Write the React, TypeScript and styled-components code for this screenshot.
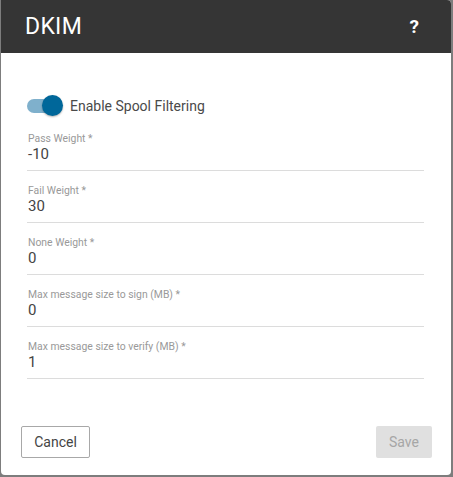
import React, { useState } from 'react';
import styled, { createGlobalStyle } from 'styled-components';

const GlobalStyle = createGlobalStyle`
  html, body {
    margin: 0;
    padding: 0;
    background: #7d7d7d;
    font-family: Roboto, 'Liberation Sans', sans-serif;
  }
`;

const fields = [
  { label: 'Pass Weight *', value: '-10' },
  { label: 'Fail Weight *', value: '30' },
  { label: 'None Weight *', value: '0' },
  { label: 'Max message size to sign (MB) *', value: '0' },
  { label: 'Max message size to verify (MB) *', value: '1' },
];

const App = () => {
  const [enabled, setEnabled] = useState(true);

  return (
    <>
      <GlobalStyle />
      <Dialog>
        <Header>
          <Title>DKIM</Title>
          <Help>?</Help>
        </Header>
        <Body>
          <ToggleRow onClick={() => setEnabled(!enabled)}>
            <Switch on={enabled}>
              <Knob on={enabled} />
            </Switch>
            <ToggleLabel>Enable Spool Filtering</ToggleLabel>
          </ToggleRow>
          {fields.map((f) => (
            <Field key={f.label}>
              <Label>{f.label}</Label>
              <Value>{f.value}</Value>
            </Field>
          ))}
        </Body>
        <Footer>
          <Cancel>Cancel</Cancel>
          <Save disabled>Save</Save>
        </Footer>
      </Dialog>
    </>
  );
};

export default App;

interface IOn {
  on: boolean;
}

const Dialog = styled.div`
  margin-left: 1px;
  width: 450px;
  height: 475px;
  background: #ffffff;
  border-radius: 0 4px 4px 4px;
  overflow: hidden;
  display: flex;
  flex-direction: column;
`;

const Header = styled.div`
  display: flex;
  justify-content: space-between;
  align-items: center;
  height: 53px;
  padding: 0 32px 0 24px;
  background: #353535;
  color: #ffffff;
`;

const Title = styled.h1`
  margin: 0;
  font-size: 23px;
  font-weight: 400;
  letter-spacing: 0.3px;
`;

const Help = styled.span`
  font-size: 19px;
  font-weight: 700;
`;

const Body = styled.div`
  flex: 1;
  padding: 41px 27px 0 26px;
`;

const ToggleRow = styled.div`
  display: flex;
  align-items: center;
  height: 24px;
  margin-bottom: 1px;
  cursor: pointer;
`;

const Switch = styled.div<IOn>`
  position: relative;
  width: 34px;
  height: 14px;
  border-radius: 7px;
  background: ${({ on }) => (on ? '#7fb0cc' : '#bdbdbd')};
  margin-right: 9px;
`;

const Knob = styled.div<IOn>`
  position: absolute;
  top: -4px;
  left: ${({ on }) => (on ? '15px' : '-2px')};
  width: 21px;
  height: 21px;
  border-radius: 50%;
  background: ${({ on }) => (on ? '#00679a' : '#f5f5f5')};
  box-shadow: 0 1px 2px rgba(0, 0, 0, 0.3);
`;

const ToggleLabel = styled.span`
  font-size: 14px;
  color: #4a4a4a;
`;

const Field = styled.div`
  height: 51px;
  padding-left: 1px;
  border-bottom: 1px solid #dcdcdc;
`;

const Label = styled.div`
  padding-top: 13px;
  font-size: 10.4px;
  line-height: 13px;
  color: #999999;
`;

const Value = styled.div`
  font-size: 15px;
  line-height: 18px;
  color: #444444;
`;

const Footer = styled.div`
  display: flex;
  justify-content: space-between;
  align-items: center;
  padding: 0 19px 17px 20px;
`;

const Button = styled.button`
  height: 32px;
  padding: 0 12px;
  border-radius: 2px;
  font-family: Roboto, 'Liberation Sans', sans-serif;
  font-size: 14px;
`;

const Cancel = styled(Button)`
  width: 69px;
  background: #ffffff;
  border: 1px solid #a8a8a8;
  color: #444444;
`;

const Save = styled(Button)`
  width: 56px;
  background: #e0e0e0;
  border: none;
  color: #a6a6a6;
`;
